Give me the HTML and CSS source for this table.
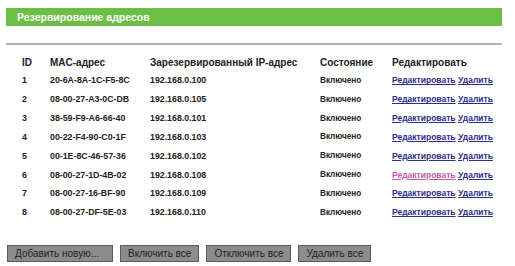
FILE: index.html
```html
<!DOCTYPE html>
<html lang="ru">
   <head>
      <meta charset="UTF-8">
      <title>Резервирование адресов</title>
      <link rel="stylesheet" href="styles.css">
   </head>
   <body>
      <div class="page">
         <h1 class="title">Резервирование адресов</h1>
         <hr class="rule">
         <table class="list">
            <colgroup>
               <col class="c-id">
               <col class="c-mac">
               <col class="c-ip">
               <col class="c-state">
               <col class="c-edit">
            </colgroup>
            <tr class="head">
               <td>ID</td>
               <td>MAC-адрес</td>
               <td>Зарезервированный IP-адрес</td>
               <td>Состояние</td>
               <td>Редактировать</td>
            </tr>
            <tr>
               <td>1</td><td>20-6A-8A-1C-F5-8C</td><td>192.168.0.100</td><td class="state">Включено</td>
               <td><a href="#">Редактировать</a> <a href="#">Удалить</a></td>
            </tr>
            <tr>
               <td>2</td><td>08-00-27-A3-0C-DB</td><td>192.168.0.105</td><td class="state">Включено</td>
               <td><a href="#">Редактировать</a> <a href="#">Удалить</a></td>
            </tr>
            <tr>
               <td>3</td><td>38-59-F9-A6-66-40</td><td>192.168.0.101</td><td class="state">Включено</td>
               <td><a href="#">Редактировать</a> <a href="#">Удалить</a></td>
            </tr>
            <tr>
               <td>4</td><td>00-22-F4-90-C0-1F</td><td>192.168.0.103</td><td class="state">Включено</td>
               <td><a href="#">Редактировать</a> <a href="#">Удалить</a></td>
            </tr>
            <tr>
               <td>5</td><td>00-1E-8C-46-57-36</td><td>192.168.0.102</td><td class="state">Включено</td>
               <td><a href="#">Редактировать</a> <a href="#">Удалить</a></td>
            </tr>
            <tr>
               <td>6</td><td>08-00-27-1D-4B-02</td><td>192.168.0.108</td><td class="state">Включено</td>
               <td><a href="#" class="visited">Редактировать</a> <a href="#">Удалить</a></td>
            </tr>
            <tr>
               <td>7</td><td>08-00-27-16-BF-90</td><td>192.168.0.109</td><td class="state">Включено</td>
               <td><a href="#">Редактировать</a> <a href="#">Удалить</a></td>
            </tr>
            <tr>
               <td>8</td><td>08-00-27-DF-5E-03</td><td>192.168.0.110</td><td class="state">Включено</td>
               <td><a href="#">Редактировать</a> <a href="#">Удалить</a></td>
            </tr>
         </table>
         <div class="actions">
            <button class="btn btn-add">Добавить новую...</button>
            <button class="btn">Включить все</button>
            <button class="btn">Отключить все</button>
            <button class="btn">Удалить все</button>
         </div>
      </div>
   </body>
</html>
```

FILE: styles.css
```css
body {
margin: 0;
background: #fff;
font-family: "Liberation Sans", Arial, sans-serif;
color: #222;
}
.page {
width: 496px;
padding: 8px 0 0 6px;
}
.title {
margin: 0;
height: 18px;
line-height: 18px;
background: #6cbe45;
color: #fff;
font-size: 10.5px;
font-weight: bold;
padding-left: 11px;
}
.rule {
margin: 17px 0 0 0;
border: 0;
height: 2px;
background: #a9b7b5;
}
.list {
border-collapse: collapse;
margin-top: 9px;
font-size: 8.8px;
font-weight: bold;
}
.list td {
height: 18.85px;
padding: 0;
white-space: nowrap;
}
.list .head td {
height: 17px;
font-size: 10px;
}
.c-id {
width: 44px;
}
.c-mac {
width: 100px;
}
.c-ip {
width: 170px;
}
.c-state {
width: 72px;
}
.list td:first-child {
padding-left: 16px;
}
.list .state {
font-size: 8.2px;
}
.list a {
font-size: 8.5px;
color: #2d2d8c;
text-decoration: underline;
}
.list a.visited {
color: #c45aac;
}
.actions {
display: flex;
gap: 7px;
margin-top: 23px;
padding-left: 1px;
}
.btn {
height: 17px;
padding: 0 7px;
background: #8c8c8c;
border: 1px solid #5a5a5a;
color: #1e1e1e;
font-family: "Liberation Sans", Arial, sans-serif;
font-size: 10px;
line-height: 15px;
}
.btn-add {
padding: 0 13px 0 7px;
}
```
